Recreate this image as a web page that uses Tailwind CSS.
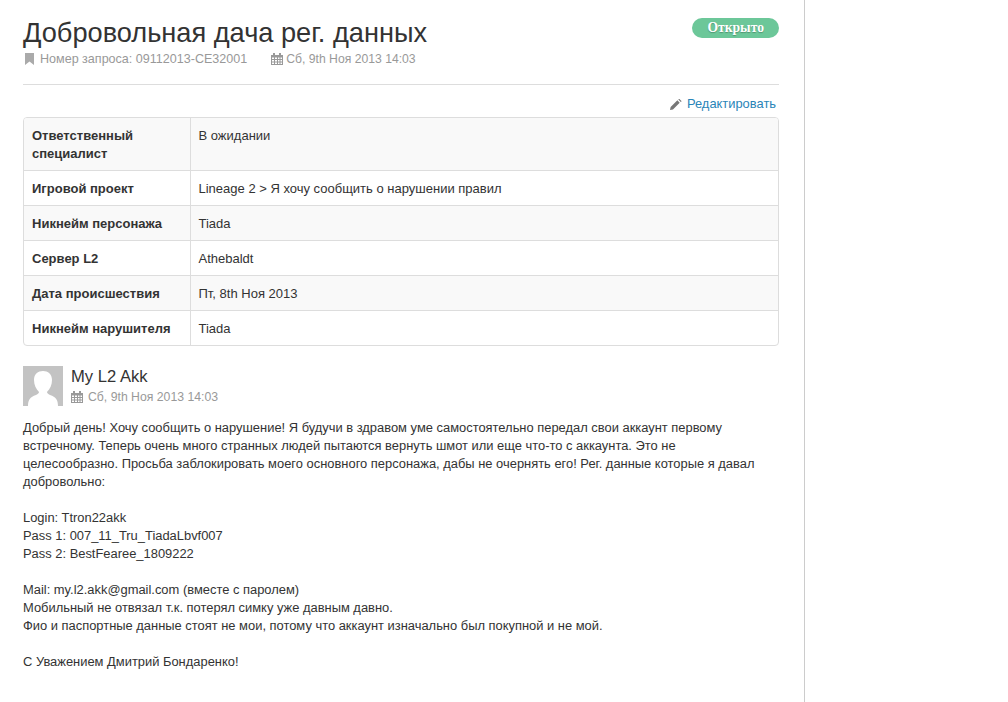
<!DOCTYPE html>
<html>
<head>
<meta charset="utf-8">
<script src="https://cdn.jsdelivr.net/npm/@tailwindcss/browser@4"></script>
</head>
<body class="bg-white">
<div class="h-[702px] w-[805px] overflow-hidden border-r border-[#cccccc] pl-[23px] pr-[25px] font-['Liberation_Sans',Arial,sans-serif] text-[13px] leading-[18px] text-[#333333]">
  <div class="flex items-start justify-between pt-[18px]">
    <div>
      <h1 class="text-[27.2px] leading-[29px] font-normal text-[#333333]">Добровольная дача рег. данных</h1>
      <div class="mt-[3px] flex text-[12.55px] text-[#999999] leading-[18px]">
        <span class="flex items-center gap-[6px]">
          <svg class="ml-[2px] h-[12px] w-[9px]" viewBox="0 0 9 12"><path fill="#aaaaaa" d="M0 0h9v12L4.500 8.500 0 12z"/></svg>
          Номер запроса: 09112013-CE32001</span>
        <span class="ml-[24px] flex items-center gap-[3px] text-[12.2px]">
          <svg class="h-[12px] w-[12px]" viewBox="0 0 12 12"><path fill="#999999" fill-rule="evenodd" d="M0 2h2V0h2v2h4V0h2v2h2v10H0zM1 4.500v1.500h2V4.500zm3 0v1.500h2V4.500zm3 0v1.500h1.500V4.500zm2.500 0v1.500H11V4.500zM1 7v1.500h2V7zm3 0v1.500h2V7zm3 0v1.500h1.500V7zm2.500 0v1.500H11V7zM1 9.500V11h2V9.500zm3 0V11h2V9.500zm3 0V11h1.500V9.500zm2.500 0V11H11V9.500z"/></svg>
          Сб, 9th Ноя 2013 14:03</span>
      </div>
    </div>
    <span class="rounded-full bg-[#6cc799] px-[15px] font-['Liberation_Serif',serif] text-[13.6px] leading-[20px] font-bold text-white [text-shadow:0_1px_1px_rgba(0,0,0,0.25)]">Открыто</span>
  </div>
  <div class="mt-[16px] border-t border-[#dddddd]"></div>
  <div class="flex h-[32px] items-center justify-end gap-[5px] pr-[3px] pt-[6px]">
    <svg class="h-[13px] w-[12px]" viewBox="0 0 13 12"><path fill="#777777" d="M0 12l.7-3.200L8 1.500l2.500 2.500L3.200 11.300zM9 .6l.6-.6h.6l2.200 2.200v.6l-.7.6z"/></svg>
    <a class="text-[12.9px] text-[#2a85b8]">Редактировать</a>
  </div>
  <div class="overflow-hidden rounded-[4px] border border-[#dddddd]">
    <table class="w-full border-collapse">
      <tbody>
        <tr class="bg-[#f9f9f9]">
          <th class="w-[166px] pt-[9px] pr-[8px] pb-[7px] pl-[8px] text-left align-top font-bold">Ответственный специалист</th>
          <td class="border-l border-[#dddddd] pt-[9px] pr-[8px] pb-[7px] pl-[8px] align-top">В ожидании</td>
        </tr>
        <tr class="border-t border-[#dddddd]">
          <th class="pt-[9px] pr-[8px] pb-[7px] pl-[8px] text-left align-top font-bold">Игровой проект</th>
          <td class="border-l border-[#dddddd] pt-[9px] pr-[8px] pb-[7px] pl-[8px] align-top">Lineage 2 &gt; Я хочу сообщить о нарушении правил</td>
        </tr>
        <tr class="border-t border-[#dddddd] bg-[#f9f9f9]">
          <th class="pt-[9px] pr-[8px] pb-[7px] pl-[8px] text-left align-top font-bold">Никнейм персонажа</th>
          <td class="border-l border-[#dddddd] pt-[9px] pr-[8px] pb-[7px] pl-[8px] align-top">Tiada</td>
        </tr>
        <tr class="border-t border-[#dddddd]">
          <th class="pt-[9px] pr-[8px] pb-[7px] pl-[8px] text-left align-top font-bold">Сервер L2</th>
          <td class="border-l border-[#dddddd] pt-[9px] pr-[8px] pb-[7px] pl-[8px] align-top">Athebaldt</td>
        </tr>
        <tr class="border-t border-[#dddddd] bg-[#f9f9f9]">
          <th class="pt-[9px] pr-[8px] pb-[7px] pl-[8px] text-left align-top font-bold">Дата происшествия</th>
          <td class="border-l border-[#dddddd] pt-[9px] pr-[8px] pb-[7px] pl-[8px] align-top">Пт, 8th Ноя 2013</td>
        </tr>
        <tr class="border-t border-[#dddddd]">
          <th class="pt-[9px] pr-[8px] pb-[7px] pl-[8px] text-left align-top font-bold">Никнейм нарушителя</th>
          <td class="border-l border-[#dddddd] pt-[9px] pr-[8px] pb-[7px] pl-[8px] align-top">Tiada</td>
        </tr>
      </tbody>
    </table>
  </div>
  <div class="mt-[20px] flex gap-[8px]">
    <svg class="h-[40px] w-[40px]" viewBox="0 0 40 40"><rect width="40" height="40" fill="#c3c3c3"/><path fill="#fff" d="M5 40c0-6 2-9 8-11 2-1 3-2 3-3-3-3-5-7-5-12 0-6 4-9 9-9s9 3 9 9c0 5-2 9-5 12 0 1 1 2 3 3 6 2 8 5 8 11z"/></svg>
    <div class="pt-[1px]">
      <div class="text-[16.6px] leading-[20px] text-[#333333]">My L2 Akk</div>
      <div class="mt-[1px] flex items-center gap-[5px] text-[12.25px] text-[#999999] leading-[18px]">
        <svg class="h-[12px] w-[12px]" viewBox="0 0 12 12"><path fill="#999999" fill-rule="evenodd" d="M0 2h2V0h2v2h4V0h2v2h2v10H0zM1 4.500v1.500h2V4.500zm3 0v1.500h2V4.500zm3 0v1.500h1.500V4.500zm2.500 0v1.500H11V4.500zM1 7v1.500h2V7zm3 0v1.500h2V7zm3 0v1.500h1.500V7zm2.500 0v1.500H11V7zM1 9.500V11h2V9.500zm3 0V11h2V9.500zm3 0V11h1.500V9.500zm2.500 0V11H11V9.500z"/></svg>
        Сб, 9th Ноя 2013 14:03
      </div>
    </div>
  </div>
  <p class="mt-[13px] w-[745px] text-[12.92px]">Добрый день! Хочу сообщить о нарушение! Я будучи в здравом уме самостоятельно передал свои аккаунт первому встречному. Теперь очень много странных людей пытаются вернуть шмот или еще что-то с аккаунта. Это не целесообразно. Просьба заблокировать моего основного персонажа, дабы не очернять его! Рег. данные которые я давал добровольно:<br><br>Login: Ttron22akk<br>Pass 1: 007_11_Tru_TiadaLbvf007<br>Pass 2: BestFearee_1809222<br><br>Mail: my.l2.akk@gmail.com (вместе с паролем)<br>Мобильный не отвязал т.к. потерял симку уже давным давно.<br>Фио и паспортные данные стоят не мои, потому что аккаунт изначально был покупной и не мой.<br><br>С Уважением Дмитрий Бондаренко!</p>
</div>
</body>
</html>
